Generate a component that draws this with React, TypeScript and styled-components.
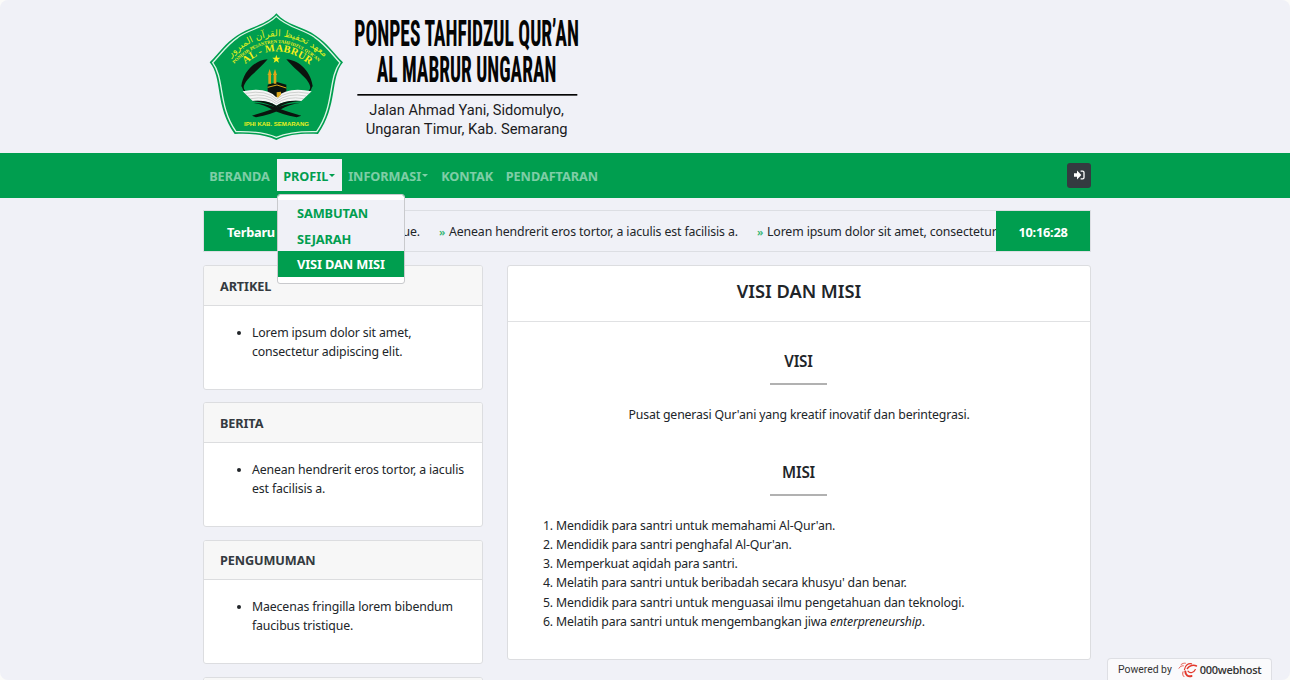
import React from "react";
import styled, { createGlobalStyle, css } from "styled-components";

const GREEN = "#009e4f";
const PAGE = "#f0f1f7";

const Global = createGlobalStyle`
  *, *::before, *::after { box-sizing: border-box; }
  html, body { margin: 0; padding: 0; background: #fbfbf9; }
  body {
    height: 680px;
    overflow: hidden;
    font-family: "Noto Sans", "Open Sans", sans-serif;
    font-size: 12.3px;
    line-height: 19.2px;
    letter-spacing: -0.16px;
    color: #212529;
  }
`;

const Page = styled.div`
  position: relative;
  height: 680px;
  overflow: hidden;
  border-radius: 8px;
  background: ${PAGE};
`;

const Container = styled.div`
  width: 888px;
  margin-left: 203px;
`;

const Header = styled.header`
  height: 153px;
  padding: 5px 0 0 200px;
  letter-spacing: 0;
  svg { display: block; }
`;

const Navbar = styled.nav`
  height: 45px;
  background: ${GREEN};
`;

const NavRow = styled(Container)`
  display: flex;
  align-items: center;
  height: 44px;
`;

const NavItem = styled.a<{ $w: number; $open?: boolean }>`
  position: relative;
  display: flex;
  align-items: center;
  width: ${(p) => p.$w}px;
  height: 32px;
  padding: 2.5px 0 0 6.2px;
  font-size: 12.7px;
  font-weight: 700;
  letter-spacing: -0.03px;
  white-space: nowrap;
  color: rgba(255, 255, 255, 0.5);
  ${(p) =>
    p.$open &&
    css`
      color: ${GREEN};
      background: ${PAGE};
    `}
`;

const Caret = styled.span`
  margin-left: 1px;
  margin-bottom: 2px;
  border-top: 3px solid currentColor;
  border-left: 3px solid transparent;
  border-right: 3px solid transparent;
`;

const Menu = styled.div`
  position: absolute;
  z-index: 5;
  top: 35px;
  left: 0;
  width: 128px;
  padding: 5px 0 6px;
  background: #fff;
  border: 1px solid #c9cacd;
  border-radius: 3px;
  background-clip: padding-box;
`;

const MenuItem = styled.div<{ $active?: boolean }>`
  height: 25.6px;
  padding-left: 19px;
  line-height: 27px;
  font-size: 12.8px;
  font-weight: 700;
  letter-spacing: -0.12px;
  color: ${(p) => (p.$active ? "#fff" : GREEN)};
  background: ${(p) => (p.$active ? GREEN : PAGE)};
`;

const LoginButton = styled.button`
  display: grid;
  place-items: center;
  width: 24px;
  height: 25px;
  margin-left: auto;
  padding: 0;
  border: 0;
  border-radius: 3px;
  background: #343a40;
`;

const Ticker = styled.section`
  display: flex;
  height: 42px;
  margin-top: 12px;
  border: 1px solid #dcdee3;
`;

const TickerLabel = styled.div<{ $w: number }>`
  display: grid;
  place-items: center;
  flex: none;
  width: ${(p) => p.$w}px;
  padding-top: 3px;
  color: #fff;
  background: ${GREEN};
  font-size: 12.8px;
  font-weight: 700;
  letter-spacing: -0.25px;
`;

const Track = styled.div`
  display: flex;
  flex: 1;
  align-items: center;
  min-width: 0;
  padding-top: 2px;
  overflow: hidden;
  white-space: nowrap;
  letter-spacing: -0.12px;
`;

const News = styled.span<{ $w: number; $end?: boolean }>`
  display: flex;
  flex: none;
  justify-content: ${(p) => (p.$end ? "flex-end" : "flex-start")};
  width: ${(p) => p.$w}px;
  margin-right: 19px;
`;

const Mark = styled.b`
  width: 10px;
  flex: none;
  color: #35b673;
  font-size: 11px;
  font-weight: 600;
`;

const Columns = styled.div`
  display: flex;
  align-items: flex-start;
  gap: 24px;
  margin-top: 13px;
`;

const Sidebar = styled.aside`
  flex: none;
  width: 280px;
  display: grid;
  gap: 12.7px;
`;

const Card = styled.article`
  background: #fff;
  border: 1px solid #dcdde0;
  border-radius: 3px;
  overflow: hidden;
`;

const SideCard = styled(Card)`
  height: 124.6px;
`;

const CardHead = styled.h2`
  margin: 0;
  height: 39.8px;
  padding: 10.85px 16px 0;
  font-size: 12.7px;
  line-height: 19.2px;
  font-weight: 700;
  letter-spacing: -0.12px;
  color: #343a40;
  background: #f7f7f7;
  border-bottom: 1px solid #dcdddf;
`;

const Bullets = styled.ul`
  margin: 16.8px 0 0;
  padding: 0 8px 0 48px;
  letter-spacing: -0.13px;
`;

const MainCard = styled(Card)`
  flex: 1;
  height: 395px;
  text-align: center;
`;

const Title = styled.h1`
  margin: 0;
  height: 56px;
  padding-top: 13px;
  font-size: 18.3px;
  line-height: 24px;
  font-weight: 600;
  letter-spacing: -0.05px;
  border-bottom: 1px solid #e0e1e3;
`;

const SubTitle = styled.h3<{ $top: number }>`
  width: 57px;
  height: 34px;
  margin: ${(p) => p.$top}px 0 0 262px;
  font-size: 15.2px;
  line-height: 20px;
  font-weight: 600;
  border-bottom: 2px solid #b1b1b1;
`;

const Text = styled.p`
  margin: 20px 0 0;
`;

const Missions = styled.ol`
  margin: 19.6px 0 0;
  padding: 0 0 0 48px;
  text-align: left;
`;

const Powered = styled.div`
  position: absolute;
  right: 18px;
  bottom: 0;
  display: flex;
  align-items: center;
  width: 165px;
  height: 22px;
  padding: 1px 0 0 10px;
  font-family: Roboto, sans-serif;
  font-size: 10.4px;
  letter-spacing: 0;
  color: #333;
  background: #fafafc;
  border: 1px solid #dedfe4;
  border-bottom: 0;
  border-radius: 4px 4px 0 0;
  svg { margin: 0 2px 0 6px; }
`;

const HostName = styled.span`
  font-family: "Open Sans", sans-serif;
  font-size: 11px;
  font-weight: 600;
  letter-spacing: -0.3px;
`;

const Brand = () => (
  <svg width="400" height="140" viewBox="0 0 1200 420">
    <defs>
      <path id="arcArabic" d="M84 164 Q229 24 382 164" />
      <path id="arcLatin" d="M103 176 Q229 52 362 176" />
      <path id="arcName" d="M136 177 Q229 100 330 180" />
    </defs>
    <path
      d="M229 25 C258 60 312 66 348 92 C382 114 402 145 429 172 C390 218 414 304 354 387 C305 385 265 388 229 405 C193 388 153 385 104 387 C44 304 68 218 29 172 C56 145 76 114 110 92 C146 66 200 60 229 25Z"
      fill={GREEN}
    />
    <path
      d="M229 34 C260 67 312 73 344 97 C377 119 396 148 420 173 C384 220 404 304 350 380 C304 379 265 381 229 397 C193 381 154 379 108 380 C54 304 74 220 38 173 C62 148 81 119 114 97 C146 73 198 67 229 34Z"
      fill="none"
      stroke="#dcf5e6"
      strokeWidth="4"
    />
    <g fill="#dfee22" fontFamily="'DejaVu Sans', sans-serif">
      <text fontSize="28" direction="rtl" textAnchor="middle">
        <textPath href="#arcArabic" startOffset="50%">معهد تحفيظ القرآن المبرور</textPath>
      </text>
    </g>
    <g fill="#f5f01a" fontFamily="'Liberation Serif', serif" fontWeight="700">
      <text fontSize="14">
        <textPath href="#arcLatin" textLength="286">PONDOK PESANTREN TAHFIDZUL QUR'AN</textPath>
      </text>
      <text fontSize="31">
        <textPath href="#arcName" textLength="212">AL - MABRUR</textPath>
      </text>
    </g>
    <path d="M229 149 l3 9 h9 l-7 6 3 9 -8 -5 -8 5 3 -9 -7 -6 h9z" fill="#f5f01a" />
    <g fill="#0b140e">
      <path d="M203 163 C160 166 128 205 124 244 L130 250 C134 220 168 204 203 163Z" />
      <path d="M259 163 C302 166 334 205 338 244 L332 250 C328 220 294 204 259 163Z" />
      <path d="M203 239 L231 231 L259 239 V280 H203Z" />
    </g>
    <path d="M127 242 Q131 262 150 274 M335 242 Q331 262 312 274" fill="none" stroke="#0b140e" strokeWidth="4" />
    <path d="M205 236 V204 L209 192 L213 204 V236Z M221 236 V204 L225 192 L229 204 V236Z" fill="#dca71c" />
    <path d="M203 208 h12 M219 208 h12" stroke="#dca71c" strokeWidth="3" />
    <path d="M203 247 L231 240 L259 249" fill="none" stroke="#dca71c" strokeWidth="3" />
    <path d="M156 293 Q204 296 240 312 Q268 322 304 332 L290 337 Q244 328 218 314 Q190 298 156 293Z" fill="#0b140e" />
    <path d="M302 293 Q254 296 218 312 Q190 322 156 332 L168 337 Q214 328 240 314 Q268 298 302 293Z" fill="#0b140e" />
    <path d="M128 259 Q200 244 229 277 Q262 244 335 259 L304 288 Q256 284 229 302 Q202 284 158 288Z" fill="#f5f5f5" />
    <path d="M230 262 v14 l4 2 9 -9 v-9z" fill="#dca71c" />
    <path
      d="M136 265 Q200 253 229 283 Q262 253 326 265 M144 273 Q200 262 229 290 Q262 262 318 273 M151 281 Q202 272 229 296 Q260 272 311 281"
      fill="none"
      stroke="#b9bcba"
      strokeWidth="2"
    />
    <path d="M156 288 Q202 284 229 302 Q256 284 304 288 Q258 291 229 310 Q202 291 156 288Z" fill="#0b140e" />
    <text x="132" y="364" fontSize="18" fontWeight="700" fontFamily="'Liberation Sans', sans-serif" fill="#e8ef20" textLength="195" lengthAdjust="spacingAndGlyphs">
      IPHI KAB. SEMARANG
    </text>
    <g fontFamily="Roboto, sans-serif" fill="#050505">
      <g fontSize="113" fontWeight="700" fontStretch="75%">
        <text x="463" y="123" textLength="674" lengthAdjust="spacingAndGlyphs">PONPES TAHFIDZUL QUR’AN</text>
        <text x="530" y="231" textLength="539" lengthAdjust="spacingAndGlyphs">AL MABRUR UNGARAN</text>
      </g>
      <rect x="472" y="267" width="660" height="5" />
      <g fontSize="46" fill="#1b1b1d">
        <text x="508" y="330" textLength="584" lengthAdjust="spacingAndGlyphs">Jalan Ahmad Yani, Sidomulyo,</text>
        <text x="497" y="387" textLength="606" lengthAdjust="spacingAndGlyphs">Ungaran Timur, Kab. Semarang</text>
      </g>
    </g>
  </svg>
);

const LoginIcon = () => (
  <svg width="11" height="10" viewBox="0 0 11 10">
    <path d="M0 3.2h3V.6L7.4 5 3 9.4V6.8H0z" fill="#fff" />
    <path d="M6.6 1.2h2q1.4 0 1.4 1.4v4.8q0 1.4-1.4 1.4h-2" fill="none" stroke="#fff" strokeWidth="1.3" />
  </svg>
);

const HostIcon = () => (
  <svg width="20" height="16" viewBox="0 0 20 16" fill="none" stroke="#e2382c" strokeLinecap="round">
    <path d="M6.5 7.5C7 3.5 10.5.8 13.5 1.8" strokeWidth="1.3" />
    <path d="M9.3 6.5C11.5 3.5 15.5 2.5 18.5 4" strokeWidth="1.5" />
    <path d="M10 9.2C12 12 16 10.5 17.3 7.5" strokeWidth="1.2" />
    <path d="M7.3 9.5C7.5 13 10 15 13.5 14" strokeWidth="2" />
    <path d="M5 9.8C4.3 11.8 4.7 13.5 5.9 14.6" strokeWidth="0.9" />
    <path d="M1 6.2C2 4.4 3.6 3.6 5.4 3.8M3 2.6C4.4 1.4 6 1 7.4 1.2" strokeWidth="0.8" />
  </svg>
);

const sideCards = [
  { title: "ARTIKEL", lines: ["Lorem ipsum dolor sit amet,", "consectetur adipiscing elit."] },
  { title: "BERITA", lines: ["Aenean hendrerit eros tortor, a iaculis", "est facilisis a."] },
  { title: "PENGUMUMAN", lines: ["Maecenas fringilla lorem bibendum", "faucibus tristique."] },
  { title: "", lines: [] },
];

export default function App() {
  return (
    <Page>
      <Global />
      <Header>
        <Brand />
      </Header>
      <Navbar>
        <NavRow>
          <NavItem $w={74}>BERANDA</NavItem>
          <NavItem $w={65} $open>
            PROFIL
            <Caret />
            <Menu>
              <MenuItem>SAMBUTAN</MenuItem>
              <MenuItem>SEJARAH</MenuItem>
              <MenuItem $active>VISI DAN MISI</MenuItem>
            </Menu>
          </NavItem>
          <NavItem $w={93}>
            INFORMASI
            <Caret />
          </NavItem>
          <NavItem $w={64.5}>KONTAK</NavItem>
          <NavItem $w={106}>PENDAFTARAN</NavItem>
          <LoginButton>
            <LoginIcon />
          </LoginButton>
        </NavRow>
      </Navbar>
      <Container>
        <Ticker>
          <TickerLabel $w={94}>Terbaru</TickerLabel>
          <Track>
            <News $w={122} $end>
              tristique.
            </News>
            <News $w={299}>
              <Mark>»</Mark>Aenean hendrerit eros tortor, a iaculis est facilisis a.
            </News>
            <News $w={240}>
              <Mark>»</Mark>Lorem ipsum dolor sit amet, consectetur
            </News>
          </Track>
          <TickerLabel $w={94}>10:16:28</TickerLabel>
        </Ticker>
        <Columns>
          <Sidebar>
            {sideCards.map((card, i) => (
              <SideCard key={i}>
                <CardHead>{card.title}</CardHead>
                {card.lines.length > 0 && (
                  <Bullets>
                    <li>
                      {card.lines[0]}
                      <br />
                      {card.lines[1]}
                    </li>
                  </Bullets>
                )}
              </SideCard>
            ))}
          </Sidebar>
          <MainCard>
            <Title>VISI DAN MISI</Title>
            <SubTitle $top={29}>VISI</SubTitle>
            <Text>Pusat generasi Qur'ani yang kreatif inovatif dan berintegrasi.</Text>
            <SubTitle $top={38}>MISI</SubTitle>
            <Missions>
              <li>Mendidik para santri untuk memahami Al-Qur'an.</li>
              <li>Mendidik para santri penghafal Al-Qur'an.</li>
              <li>Memperkuat aqidah para santri.</li>
              <li>Melatih para santri untuk beribadah secara khusyu' dan benar.</li>
              <li>Mendidik para santri untuk menguasai ilmu pengetahuan dan teknologi.</li>
              <li>
                Melatih para santri untuk mengembangkan jiwa <em>enterpreneurship</em>.
              </li>
            </Missions>
          </MainCard>
        </Columns>
      </Container>
      <Powered>
        Powered by
        <HostIcon />
        <HostName>000webhost</HostName>
      </Powered>
    </Page>
  );
}
